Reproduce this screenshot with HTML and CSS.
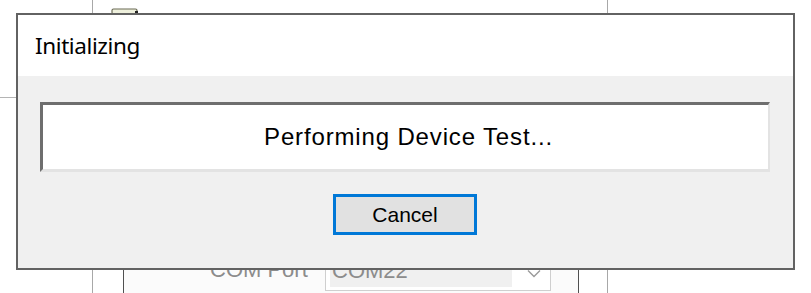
FILE: index.html
```html
<!DOCTYPE html>
<html>
<head>
<meta charset="utf-8">
<link rel="stylesheet" href="styles.css">
</head>
<body>
<div class="app">
  <div class="col-left"><div class="hline"></div></div>
  <div class="main">
    <div class="main-top">
      <svg class="tool-icon" width="28" height="8" viewBox="0 0 28 8"><rect x="1" y="1" width="25" height="5" rx="1.5" fill="#eef0dc" stroke="#6a6a55" stroke-width="1.2"/><rect x="24" y="3" width="3" height="3" fill="#222"/></svg>
    </div>
    <div class="panel">
      <div class="form-row">
        <span class="form-label">COM Port</span>
        <div class="combo">
          <div class="combo-field">COM22</div>
          <svg class="combo-arrow" width="14" height="9" viewBox="0 0 14 9"><path d="M1 1.5 L7 7.5 L13 1.5" fill="none" stroke="#9a9a9a" stroke-width="1.4"/></svg>
        </div>
      </div>
    </div>
  </div>
  <div class="col-right"><div class="hline light"></div></div>
</div>

<div class="dialog">
  <div class="dialog-title">Initializing</div>
  <div class="dialog-body">
    <div class="message">Performing Device Test...</div>
    <button class="cancel">Cancel</button>
  </div>
</div>
</body>
</html>
```

FILE: styles.css
```css
html, body {
  margin: 0;
  padding: 0;
}
body {
  width: 811px;
  height: 293px;
  overflow: hidden;
  background: #ffffff;
  position: relative;
  font-family: "Liberation Sans", Arial, sans-serif;
}

/* background application window */
.app {
  display: flex;
  height: 293px;
}
.col-left {
  width: 92px;
  border-right: 1px solid #a8a8a8;
}
.hline {
  margin-top: 97px;
  border-top: 1px solid #b4b4b4;
}
.hline.light {
  border-top-color: #d4d4d4;
}
.main {
  width: 514px;
  border-right: 1px solid #a8a8a8;
  display: flex;
  flex-direction: column;
}
.main-top {
  height: 230px;
  padding-left: 18px;
  padding-top: 8px;
  box-sizing: border-box;
}
.tool-icon {
  display: block;
}
.panel {
  flex: 1;
  margin-left: 30px;
  width: 454px;
  border-left: 1px solid #505050;
  border-right: 1px solid #505050;
  background: #fbfbfb;
}
.form-row {
  display: flex;
  align-items: flex-start;
  padding-top: 24px;
}
.form-label {
  margin-left: 86px;
  width: 115px;
  font-size: 22px;
  color: #8c8c8c;
  padding-top: 3px;
}
.combo {
  width: 226px;
  height: 37px;
  box-sizing: border-box;
  border: 1px solid #cfcfcf;
  background: #ffffff;
  display: flex;
  align-items: flex-start;
  padding: 4px 4px;
}
.combo-field {
  width: 182px;
  height: 28px;
  background: #f0f0f0;
  color: #8c8c8c;
  font-size: 22px;
  line-height: 24px;
  padding-left: 2px;
  box-sizing: border-box;
}
.combo-arrow {
  margin-left: 15px;
  margin-top: 10px;
}

/* modal dialog overlay */
.dialog {
  position: absolute;
  left: 16px;
  top: 13px;
  width: 779px;
  height: 257px;
  box-sizing: border-box;
  border: 2px solid #626262;
  background: #f0f0f0;
  display: flex;
  flex-direction: column;
}
.dialog-title {
  height: 61px;
  background: #ffffff;
  display: flex;
  align-items: center;
  padding-left: 17px;
  font-family: "Noto Sans", "Open Sans", sans-serif;
  font-size: 22.5px;
  letter-spacing: -0.4px;
  color: #000000;
}
.dialog-body {
  flex: 1;
  display: flex;
  flex-direction: column;
  align-items: center;
  padding: 26px 23px 0 22px;
}
.message {
  align-self: stretch;
  height: 70px;
  box-sizing: border-box;
  background: #ffffff;
  border-style: solid;
  border-width: 3px 2px 3px 3px;
  border-color: #6e6e6e #e3e3e3 #e3e3e3 #6e6e6e;
  display: flex;
  align-items: center;
  justify-content: center;
  font-size: 24px;
  letter-spacing: 0.85px;
  color: #000000;
  padding-left: 6px;
}
.cancel {
  margin-top: 22px;
  width: 144px;
  height: 41px;
  box-sizing: border-box;
  border: 3px solid #0078d7;
  background: #e1e1e1;
  font-family: "Liberation Sans", Arial, sans-serif;
  font-size: 21px;
  color: #000000;
  padding: 0;
}
```
